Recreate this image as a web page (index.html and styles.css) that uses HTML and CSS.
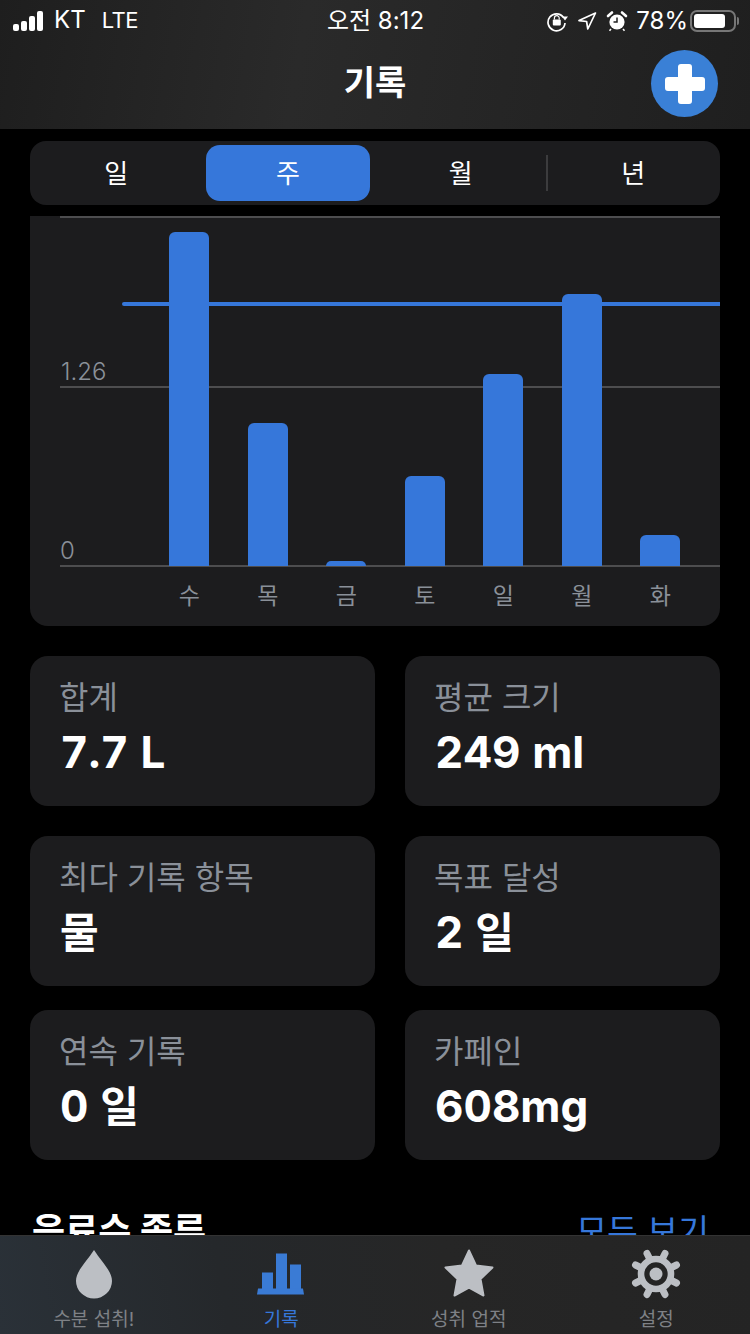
FILE: index.html
```html
<!DOCTYPE html>
<html lang="ko">
<head>
    <meta charset="UTF-8">
    <title>기록</title>
    <link rel="stylesheet" href="styles.css">
</head>
<body>
    <div class="app">
        <header class="top">
            <div class="statusbar">
                <div class="status-left">
                    <span class="signal"><i class="s1"></i><i class="s2"></i><i class="s3"></i><i class="s4"></i></span>
                    <span class="carrier">KT</span>
                    <span class="net">LTE</span>
                </div>
                <div class="status-time">오전 8:12</div>
                <div class="status-right">
                    <svg class="st-icon" width="22" height="22" viewBox="0 0 22 22"><path d="M17.500 7.500A8.500 8.500 0 1 0 19 13" fill="none" stroke="#fff" stroke-width="1.700"/><path d="M16 6.500h6l-3 4z" fill="#fff"/><rect x="6.800" y="9.500" width="8" height="6" rx="1" fill="#fff"/><path d="M8.400 9.500V8a2.400 2.400 0 0 1 4.800 0v1.500" fill="none" stroke="#fff" stroke-width="1.200"/></svg>
                    <svg class="st-icon" width="20" height="20" viewBox="0 0 20 20"><path d="M18.500 2 2 9.600l7.600.9 1.200 7.500z" fill="none" stroke="#fff" stroke-width="1.700" stroke-linejoin="round"/></svg>
                    <svg class="st-icon st-alarm" width="22" height="22" viewBox="0 0 22 22"><circle cx="11" cy="12" r="7.600" fill="#fff"/><path d="M11 7.500V12H7.500" fill="none" stroke="#222" stroke-width="1.500"/><path d="M2 6l4-3.500M20 6l-4-3.500" stroke="#fff" stroke-width="2.600" stroke-linecap="round"/><path d="M5 19l-1.500 1.800M17 19l1.500 1.800" stroke="#fff" stroke-width="1.500"/></svg>
                    <span class="percent">78%</span>
                    <span class="battery"><span class="battery-fill"></span></span>
                    <span class="battery-cap"></span>
                </div>
            </div>
            <div class="navbar">
                <h1>기록</h1>
                <div class="add-btn">
                    <svg width="42" height="42" viewBox="0 0 42 42"><path d="M17 1h8a3 3 0 0 1 3 3v10h10a3 3 0 0 1 3 3v8a3 3 0 0 1-3 3H28v10a3 3 0 0 1-3 3h-8a3 3 0 0 1-3-3V28H4a3 3 0 0 1-3-3v-8a3 3 0 0 1 3-3h10V4a3 3 0 0 1 3-3z" fill="#fff"/></svg>
                </div>
            </div>
        </header>

        <main class="content">
            <div class="segments">
                <div class="seg">일</div>
                <div class="seg active">주</div>
                <div class="seg">월</div>
                <div class="seg-divider"></div>
                <div class="seg">년</div>
            </div>

            <section class="chart">
                <div class="grid-line line-top"></div>
                <div class="grid-line line-mid"></div>
                <div class="grid-line line-zero"></div>
                <span class="axis-label label-mid">1.26</span>
                <span class="axis-label label-zero">0</span>
                <div class="bars">
                    <div class="bar-col"><div class="bar" style="height: 334px"></div></div>
                    <div class="bar-col"><div class="bar" style="height: 143px"></div></div>
                    <div class="bar-col"><div class="bar" style="height: 5px"></div></div>
                    <div class="bar-col"><div class="bar" style="height: 90px"></div></div>
                    <div class="bar-col"><div class="bar" style="height: 192px"></div></div>
                    <div class="bar-col"><div class="bar" style="height: 272px"></div></div>
                    <div class="bar-col"><div class="bar" style="height: 31px"></div></div>
                </div>
                <div class="goal-line"></div>
                <div class="days">
                    <span>수</span><span>목</span><span>금</span><span>토</span><span>일</span><span>월</span><span>화</span>
                </div>
            </section>

            <section class="stats">
                <div class="stat-row">
                    <div class="stat wide"><div class="stat-label">합계</div><div class="stat-value">7.7 L</div></div>
                    <div class="stat"><div class="stat-label">평균 크기</div><div class="stat-value">249 ml</div></div>
                </div>
                <div class="stat-row row-tight">
                    <div class="stat wide"><div class="stat-label">최다 기록 항목</div><div class="stat-value"><span class="ko">물</span></div></div>
                    <div class="stat"><div class="stat-label">목표 달성</div><div class="stat-value">2 <span class="ko">일</span></div></div>
                </div>
                <div class="stat-row">
                    <div class="stat wide"><div class="stat-label">연속 기록</div><div class="stat-value">0 <span class="ko">일</span></div></div>
                    <div class="stat"><div class="stat-label">카페인</div><div class="stat-value">608mg</div></div>
                </div>
            </section>

            <div class="section-head">
                <h2>음료수 종류</h2>
                <span class="see-all">모두 보기</span>
            </div>
        </main>

        <nav class="tabbar">
            <div class="tab">
                <svg width="40" height="50" viewBox="0 0 40 50"><path d="M20 1C27 12 38 22 38 32a18 17.500 0 0 1-36 0C2 22 13 12 20 1z" fill="#bcbfc4"/></svg>
                <span>수분 섭취!</span>
            </div>
            <div class="tab current">
                <svg width="47" height="41" viewBox="0 0 47 41"><path d="M5 19h11v17H5zM19 0h11v36H19zM33 11h11v25H33z" fill="#3a7bd5"/><path d="M1 35h45l1 6H0z" fill="#3a7bd5"/></svg>
                <span>기록</span>
            </div>
            <div class="tab">
                <svg width="52" height="50" viewBox="0 0 52 50"><path d="M26 1.500 33 16.500l16.500 2-12 11.500 3 16.500L26 38.500l-14.500 8 3-16.500-12-11.500 16.500-2z" fill="#bcbfc4" stroke="#bcbfc4" stroke-width="2" stroke-linejoin="round"/></svg>
                <span>성취 업적</span>
            </div>
            <div class="tab">
                <svg width="50" height="50" viewBox="0 0 50 50">
                    <g stroke="#bcbfc4" stroke-width="7" stroke-linecap="round">
                        <path d="M16 4.500l3 6M34 4.500l-3 6M4.500 16l6 3M45.500 16l-6 3M4.500 34l6-3M45.500 34l-6-3M16 45.500l3-6M34 45.500l-3-6"/>
                    </g>
                    <circle cx="25" cy="25" r="15" fill="none" stroke="#bcbfc4" stroke-width="6.600"/>
                    <circle cx="25" cy="25" r="6.500" fill="#bcbfc4"/>
                </svg>
                <span>설정</span>
            </div>
        </nav>
    </div>
</body>
</html>
```

FILE: styles.css
```css
* {
    box-sizing: border-box;
}
html, body {
    margin: 0;
    padding: 0;
    background-color: #000;
}
body {
    font-family: Inter, "Noto Sans CJK KR", sans-serif;
    color: #fff;
}
.app {
    width: 750px;
    height: 1334px;
    display: flex;
    flex-direction: column;
    overflow: hidden;
}

/* header */
.top {
    height: 129px;
    flex-shrink: 0;
    background: linear-gradient(100deg, #1e1e1e 0%, #2a2a2a 40%, #1f1f1f 100%);
}
.statusbar {
    height: 41px;
    padding: 0 11px 0 13px;
    display: flex;
    align-items: center;
    justify-content: space-between;
    font-size: 23px;
}
.status-left {
    width: 200px;
    display: flex;
    align-items: center;
}
.signal {
    display: flex;
    align-items: flex-end;
    gap: 2px;
    margin-right: 11px;
}
.signal i {
    width: 6px;
    background-color: #fff;
    border-radius: 2px;
    display: block;
}
.s1 { height: 7px; }
.s2 { height: 10px; }
.s3 { height: 15px; }
.s4 { height: 20px; }
.carrier {
    margin-right: 16px;
    margin-bottom: 2px;
    font-size: 24px;
}
.net {
    font-size: 22px;
    letter-spacing: -0.5px;
    margin-bottom: 2px;
}
.status-time {
    font-size: 24px;
    margin-bottom: 4px;
    margin-left: 3px;
}
.status-right {
    width: 204px;
    display: flex;
    align-items: center;
    justify-content: flex-end;
}
.st-icon {
    margin-right: 9px;
    flex-shrink: 0;
}
.st-alarm {
    margin-right: 8px;
}
.percent {
    font-size: 24px;
    margin-right: 2px;
}
.battery {
    width: 46px;
    height: 22px;
    border: 2px solid #777;
    border-radius: 7px;
    padding: 2px;
    display: block;
}
.battery-fill {
    display: block;
    width: 31px;
    height: 14px;
    background-color: #fff;
    border-radius: 3px;
}
.battery-cap {
    width: 2px;
    height: 8px;
    margin-left: 1px;
    background-color: #777;
    border-radius: 0 2px 2px 0;
}
.navbar {
    height: 88px;
    position: relative;
    display: flex;
    align-items: center;
    justify-content: center;
}
.navbar h1 {
    margin: 0 0 9px;
    font-size: 34px;
    font-weight: 700;
}
.add-btn {
    position: absolute;
    right: 32px;
    top: 9px;
    width: 67px;
    height: 67px;
    border-radius: 50%;
    background-color: #3a80d6;
    display: flex;
    align-items: center;
    justify-content: center;
}

/* main area */
.content {
    flex: 1;
    min-height: 0;
    overflow: hidden;
    padding: 12px 30px 0;
}
.segments {
    height: 64px;
    padding: 4px 0;
    background-color: #1c1c1e;
    border-radius: 16px;
    display: flex;
    align-items: stretch;
    position: relative;
}
.seg {
    flex: 0 0 172.5px;
    padding-bottom: 3px;
    display: flex;
    align-items: center;
    justify-content: center;
    font-size: 26px;
    border-radius: 14px;
}
.seg.active {
    flex: 0 0 164px;
    margin: 0 4.5px 0 3.5px;
    background-color: #3677da;
}
.seg-divider {
    position: absolute;
    left: 516px;
    top: 14px;
    width: 2px;
    height: 36px;
    background-color: #3c3c3e;
}

/* chart */
.chart {
    margin-top: 11px;
    height: 410px;
    position: relative;
    background-color: #1c1c1e;
    border-radius: 0 0 18px 18px;
}
.grid-line {
    position: absolute;
    left: 30px;
    right: 0;
    height: 2px;
    background-color: #4d4d4f;
}
.line-top { top: 0; }
.line-mid { top: 170px; }
.line-zero { top: 349px; }
.axis-label {
    position: absolute;
    font-size: 24px;
    font-weight: 300;
    line-height: 30px;
    color: #8a9099;
}
.label-mid { top: 141px; left: 31px; }
.label-zero { top: 320px; left: 30px; }
.bars {
    position: relative;
    height: 350px;
    padding: 0 20.5px 0 120px;
    display: flex;
    align-items: flex-end;
}
.bar-col {
    flex: 1;
    display: flex;
    justify-content: center;
}
.bar {
    width: 40px;
    background-color: #3677da;
    border-radius: 6px 6px 0 0;
}
.goal-line {
    position: absolute;
    left: 92px;
    right: 0;
    top: 86px;
    height: 4px;
    border-radius: 2px 0 0 2px;
    background-color: #3677da;
}
.days {
    padding: 11px 20.5px 0 120px;
    display: flex;
    font-size: 23px;
    color: #8a9099;
}
.days span {
    flex: 1;
    text-align: center;
}

/* stat cards */
.stats {
    margin-top: 30px;
    display: flex;
    flex-direction: column;
}
.stat-row {
    display: flex;
    gap: 30px;
    margin-bottom: 30px;
}
.row-tight {
    margin-bottom: 24px;
}
.stat {
    flex: 1;
    height: 150px;
    padding: 20px 30px 0;
    background-color: #1c1c1e;
    border-radius: 18px;
}
.stat.wide {
    flex: none;
    width: 345px;
}
.stat-label {
    margin-left: -1px;
    font-size: 32px;
    line-height: 44px;
    color: #8a9099;
}
.stat-value {
    padding-top: 1px;
    font-size: 44px;
    line-height: 62px;
    font-weight: 700;
    font-variant-numeric: tabular-nums;
}
.ko {
    font-size: 42px;
}

.section-head {
    display: flex;
    justify-content: space-between;
    align-items: center;
    margin-top: 12px;
    padding-right: 11px;
    padding-left: 2px;
}
.section-head h2 {
    margin: 0;
    font-size: 36px;
    font-weight: 700;
}
.see-all {
    font-size: 33.5px;
    color: #3677da;
}

/* bottom tabs */
.tabbar {
    height: 99px;
    flex-shrink: 0;
    display: flex;
    border-top: 1px solid #333;
    background: linear-gradient(80deg, #2a3138 0%, #25282b 30%, #262626 60%, #242424 100%);
}
.tab {
    width: 187.5px;
    padding-top: 13px;
    display: flex;
    flex-direction: column;
    align-items: center;
    font-size: 19px;
    line-height: 26px;
    color: #7e8186;
}
.tab svg {
    height: 50px;
    margin-bottom: 8px;
}
.tab.current svg {
    margin-right: 2px;
}
.tab.current {
    color: #3677da;
}
```
